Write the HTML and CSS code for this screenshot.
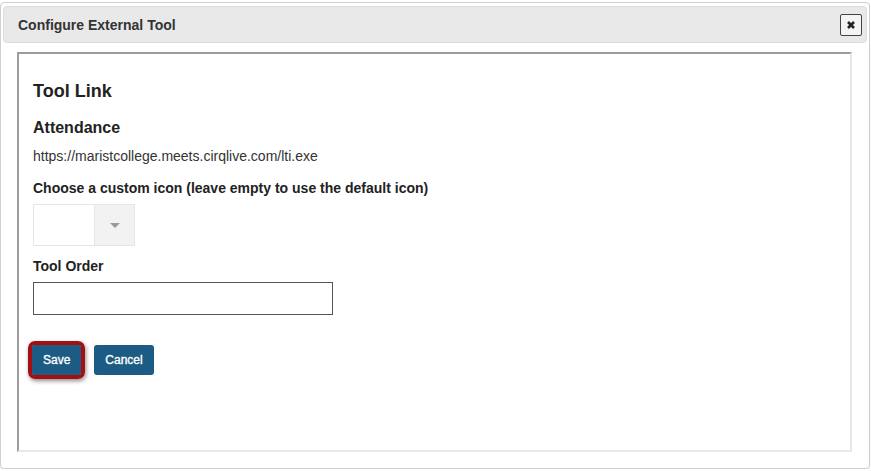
FILE: index.html
```html
<!DOCTYPE html>
<html lang="en">
<head>
<meta charset="utf-8">
<title>Configure External Tool</title>
<link rel="stylesheet" href="styles.css">
</head>
<body>
<div class="backdrop"><span class="backdrop-line"></span></div>
<div class="dialog">
  <div class="dialog-header">
    <span class="dialog-title">Configure External Tool</span>
    <button class="close-btn" type="button" aria-label="Close">
      <svg width="10" height="10" viewBox="0 0 10 10"><path d="M2 2 L8 8 M8 2 L2 8" stroke="#222" stroke-width="2.6" stroke-linecap="butt"/></svg>
    </button>
  </div>
  <div class="frame">
    <h2 class="tool-link">Tool Link</h2>
    <h3 class="tool-name">Attendance</h3>
    <div class="tool-url">https://maristcollege.meets.cirqlive.com/lti.exe</div>
    <div class="field-label label-icon">Choose a custom icon (leave empty to use the default icon)</div>
    <div class="icon-select">
      <div class="icon-select-value"></div>
      <div class="icon-select-arrow"><span class="caret"></span></div>
    </div>
    <div class="field-label label-order">Tool Order</div>
    <input class="order-input" type="text">
    <div class="actions">
      <span class="save-ring"><button class="btn" type="button">Save</button></span>
      <button class="btn btn-cancel" type="button">Cancel</button>
    </div>
  </div>
</div>
</body>
</html>
```

FILE: styles.css
```css
html, body {
  margin: 0;
  padding: 0;
  background: #ffffff;
  font-family: "Liberation Sans", Arial, sans-serif;
  color: #222;
}

.backdrop {
  position: absolute;
  left: 0;
  top: 0;
  width: 871px;
  height: 471px;
  z-index: -1;
}

.backdrop-line {
  position: absolute;
  left: 89px;
  top: 0;
  width: 1px;
  height: 3px;
  background: #d6d6d6;
}

.dialog {
  margin-top: 2px;
  width: 868px;
  border: 1px solid #cfcfcf;
  border-radius: 4px;
  background: #ffffff;
  padding-bottom: 16px;
  box-shadow: 0 1px 2px rgba(0,0,0,0.08);
}

.dialog-header {
  margin: 3px 2px 0 2px;
  height: 35px;
  border: 1px solid #dcdcdc;
  border-radius: 4px;
  background: #e9e9e9;
  display: flex;
  align-items: center;
  justify-content: space-between;
  padding: 0 4px 0 14px;
}

.dialog-title {
  font-size: 14px;
  font-weight: bold;
  color: #333;
}

.close-btn {
  width: 22px;
  height: 22px;
  margin-top: 1px;
  padding: 0;
  border: 1px solid #444;
  border-radius: 2px;
  background: #f4f4f4;
  display: flex;
  align-items: center;
  justify-content: center;
}

.frame {
  margin: 9px 0 0 16px;
  width: 817px;
  height: 396px;
  border-style: solid;
  border-width: 2px;
  border-color: #9c9c9c #e8e8e8 #e8e8e8 #9c9c9c;
  padding: 0 0 0 14px;
  box-sizing: content-box;
}

.frame > * {
  box-sizing: border-box;
}

.tool-link {
  margin: 27px 0 0 0;
  font-size: 18px;
  line-height: 20px;
  font-weight: bold;
  color: #222;
}

.tool-name {
  margin: 18px 0 0 0;
  font-size: 16px;
  line-height: 18px;
  font-weight: bold;
  color: #222;
}

.tool-url {
  margin-top: 11px;
  font-size: 14px;
  line-height: 16px;
  color: #333;
}

.field-label {
  font-size: 14px;
  line-height: 16px;
  font-weight: bold;
  color: #222;
}

.label-icon {
  margin-top: 16px;
}

.icon-select {
  margin-top: 8px;
  width: 102px;
  height: 42px;
  border: 1px solid #e6e6e6;
  display: flex;
}

.icon-select-value {
  width: 60px;
  background: #ffffff;
  border-right: 1px solid #e6e6e6;
}

.icon-select-arrow {
  flex: 1;
  background: #f2f2f2;
  display: flex;
  align-items: center;
  justify-content: center;
}

.caret {
  width: 0;
  height: 0;
  border-left: 5px solid transparent;
  border-right: 5px solid transparent;
  border-top: 5px solid #9a9a9a;
  margin-top: 1px;
}

.label-order {
  margin-top: 12px;
}

.order-input {
  display: block;
  margin: 8px 0 0 0;
  width: 300px;
  height: 33px;
  border: 1px solid #555;
  border-radius: 0;
  padding: 0 6px;
  font-family: inherit;
  font-size: 14px;
  background: #fff;
}

.actions {
  margin-top: 30px;
  display: flex;
  align-items: flex-start;
}

.save-ring {
  display: inline-flex;
  margin-left: -5px;
  margin-top: -4px;
  border: 4px solid #a40f14;
  border-radius: 7px;
  box-shadow: 1px 2px 4px rgba(0,0,0,0.45);
}

.btn {
  height: 30px;
  padding: 0 11px;
  border: none;
  border-radius: 3px;
  background: #1c5b83;
  color: #ffffff;
  font-family: inherit;
  font-size: 12px;
  font-weight: normal;
  -webkit-text-stroke: 0.35px #ffffff;
  cursor: pointer;
}

.save-ring .btn {
  border-radius: 2px;
}

.btn-cancel {
  margin-left: 9px;
}
```
